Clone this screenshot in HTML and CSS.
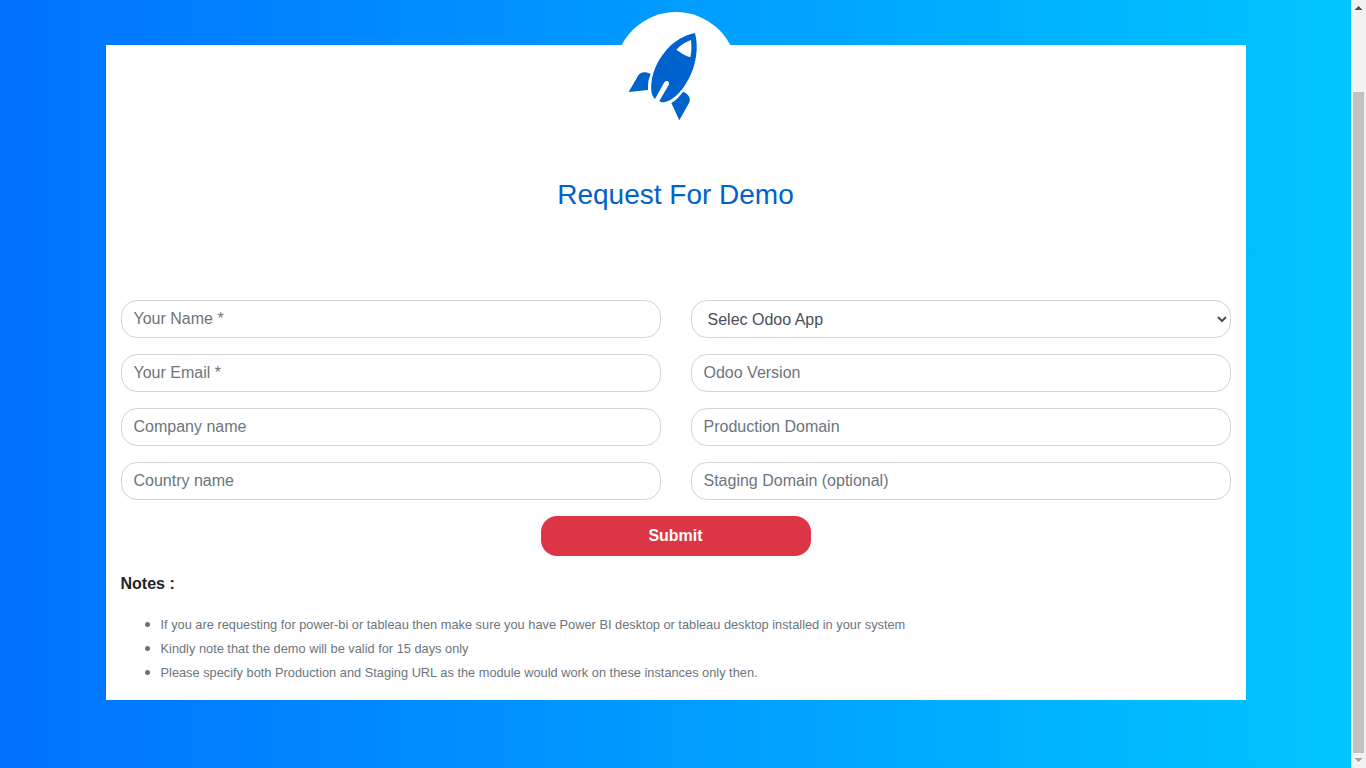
FILE: index.html
```html
<!DOCTYPE html>
<html lang="en">
<head>
  <meta charset="utf-8">
  <meta name="viewport" content="width=device-width, initial-scale=1">
  <title>Request For Demo</title>
  <link rel="stylesheet" href="styles.css">
</head>
<body>
  <main class="page">
    <section class="card">
      <div class="logo">
        <svg class="rocket" viewBox="45 36 366 366" aria-hidden="true">
          <path fill="#0062cc" fill-rule="evenodd" d="M285 99C293 130 292 165 281 200C266 248 228 307 184 307L178 303L206 255C211 245 199 238 192 248L165 297C150 285 151 250 160 220C176 170 218 112 285 99ZM229 149C243 159 255 167 271 172C275 155 275 137 273 120C257 126 241 135 229 149Z"/>
          <path fill="#0062cc" d="M86 276L115 226C122 214 138 214 152 222C145 238 143 252 144 270Z"/>
          <path fill="#0062cc" d="M214 309C229 300 239 289 249 275C265 281 274 294 267 309L238 361Z"/>
        </svg>
      </div>
      <form class="form">
        <h3 class="title">Request For Demo</h3>
        <div class="fields">
          <input class="control" type="text" placeholder="Your Name *" aria-label="Your Name">
          <select class="control" aria-label="Odoo App">
            <option>Selec Odoo App</option>
          </select>
          <input class="control" type="email" placeholder="Your Email *" aria-label="Your Email">
          <input class="control" type="text" placeholder="Odoo Version" aria-label="Odoo Version">
          <input class="control" type="text" placeholder="Company name" aria-label="Company name">
          <input class="control" type="text" placeholder="Production Domain" aria-label="Production Domain">
          <input class="control" type="text" placeholder="Country name" aria-label="Country name">
          <input class="control" type="text" placeholder="Staging Domain (optional)" aria-label="Staging Domain">
        </div>
        <button class="submit" type="submit">Submit</button>
      </form>
      <div class="notes">
        <strong>Notes :</strong>
        <ul class="notes-list">
          <li><small>If you are requesting for power-bi or tableau then make sure you have Power BI desktop or tableau desktop installed in your system</small></li>
          <li><small>Kindly note that the demo will be valid for 15 days only</small></li>
          <li><small>Please specify both Production and Staging URL as the module would work on these instances only then.</small></li>
        </ul>
      </div>
    </section>
  </main>
  <div class="scrollbar" aria-hidden="true">
    <svg class="arrow" viewBox="0 0 7 4" shape-rendering="crispEdges"><path fill="#505050" d="M3 0h1v1h1v1h1v1h1v1H0V3h1V2h1V1h1z"/></svg>
    <div class="thumb"></div>
    <svg class="arrow" viewBox="0 0 7 4" shape-rendering="crispEdges"><path fill="#a3a3a3" d="M0 0h7v1H6v1H5v1H4v1H3V3H2V2H1V1H0z"/></svg>
  </div>
</body>
</html>
```
FILE: styles.css
```css
*,
*::before,
*::after {
  box-sizing: border-box;
}

body {
  display: flex;
  min-height: 100vh;
  margin: 0;
  color: #212529;
  font-family: "Liberation Sans", Arial, sans-serif;
  font-size: 16px;
  line-height: 24px;
}

.page {
  flex: 1;
  min-width: 0;
  padding: 45px 0 64px;
  background: linear-gradient(to right, #0072ff, #00c6ff);
}

.card {
  display: flow-root;
  max-width: 1140px;
  margin: 0 auto;
  padding: 0 15px 16px;
  background: #fff;
}

.logo {
  width: 122px;
  height: 122px;
  margin: -33px auto 0;
  border-radius: 50%;
  background: #fff;
}

.rocket {
  display: block;
  width: 100%;
  height: 100%;
}

.title {
  margin: 44px 0 88px;
  color: #0062cc;
  font-size: 28px;
  font-weight: 500;
  line-height: 34px;
  text-align: center;
}

.fields {
  display: grid;
  grid-template-columns: 1fr 1fr;
  gap: 16px 30px;
}

.control {
  width: 100%;
  height: 38px;
  padding: 6px 12px;
  border: 1px solid #ced4da;
  border-radius: 16px;
  background: #fff;
  color: #495057;
  font: inherit;
}

select.control {
  padding-right: 0;
}

.control::placeholder {
  color: #6c757d;
  opacity: 1;
}

.submit {
  display: block;
  width: 270px;
  height: 40px;
  margin: 16px auto;
  border: 0;
  border-radius: 16px;
  background: #dc3545;
  color: #fff;
  font: inherit;
  font-weight: 600;
  cursor: pointer;
}

.notes-list {
  margin: 16px 0 0;
  padding-left: 40px;
  color: #6c757d;
}

.notes-list small {
  font-size: 80%;
  line-height: 1;
}

.scrollbar {
  display: flex;
  flex: none;
  flex-direction: column;
  align-items: center;
  width: 15px;
  padding: 6px 0;
  background: #f1f1f1;
}

.arrow {
  flex: none;
  width: 7px;
  height: 4px;
}

.thumb {
  flex: 1;
  width: 11px;
  margin: 82px 0 5px;
  background: #c1c1c1;
}
```
